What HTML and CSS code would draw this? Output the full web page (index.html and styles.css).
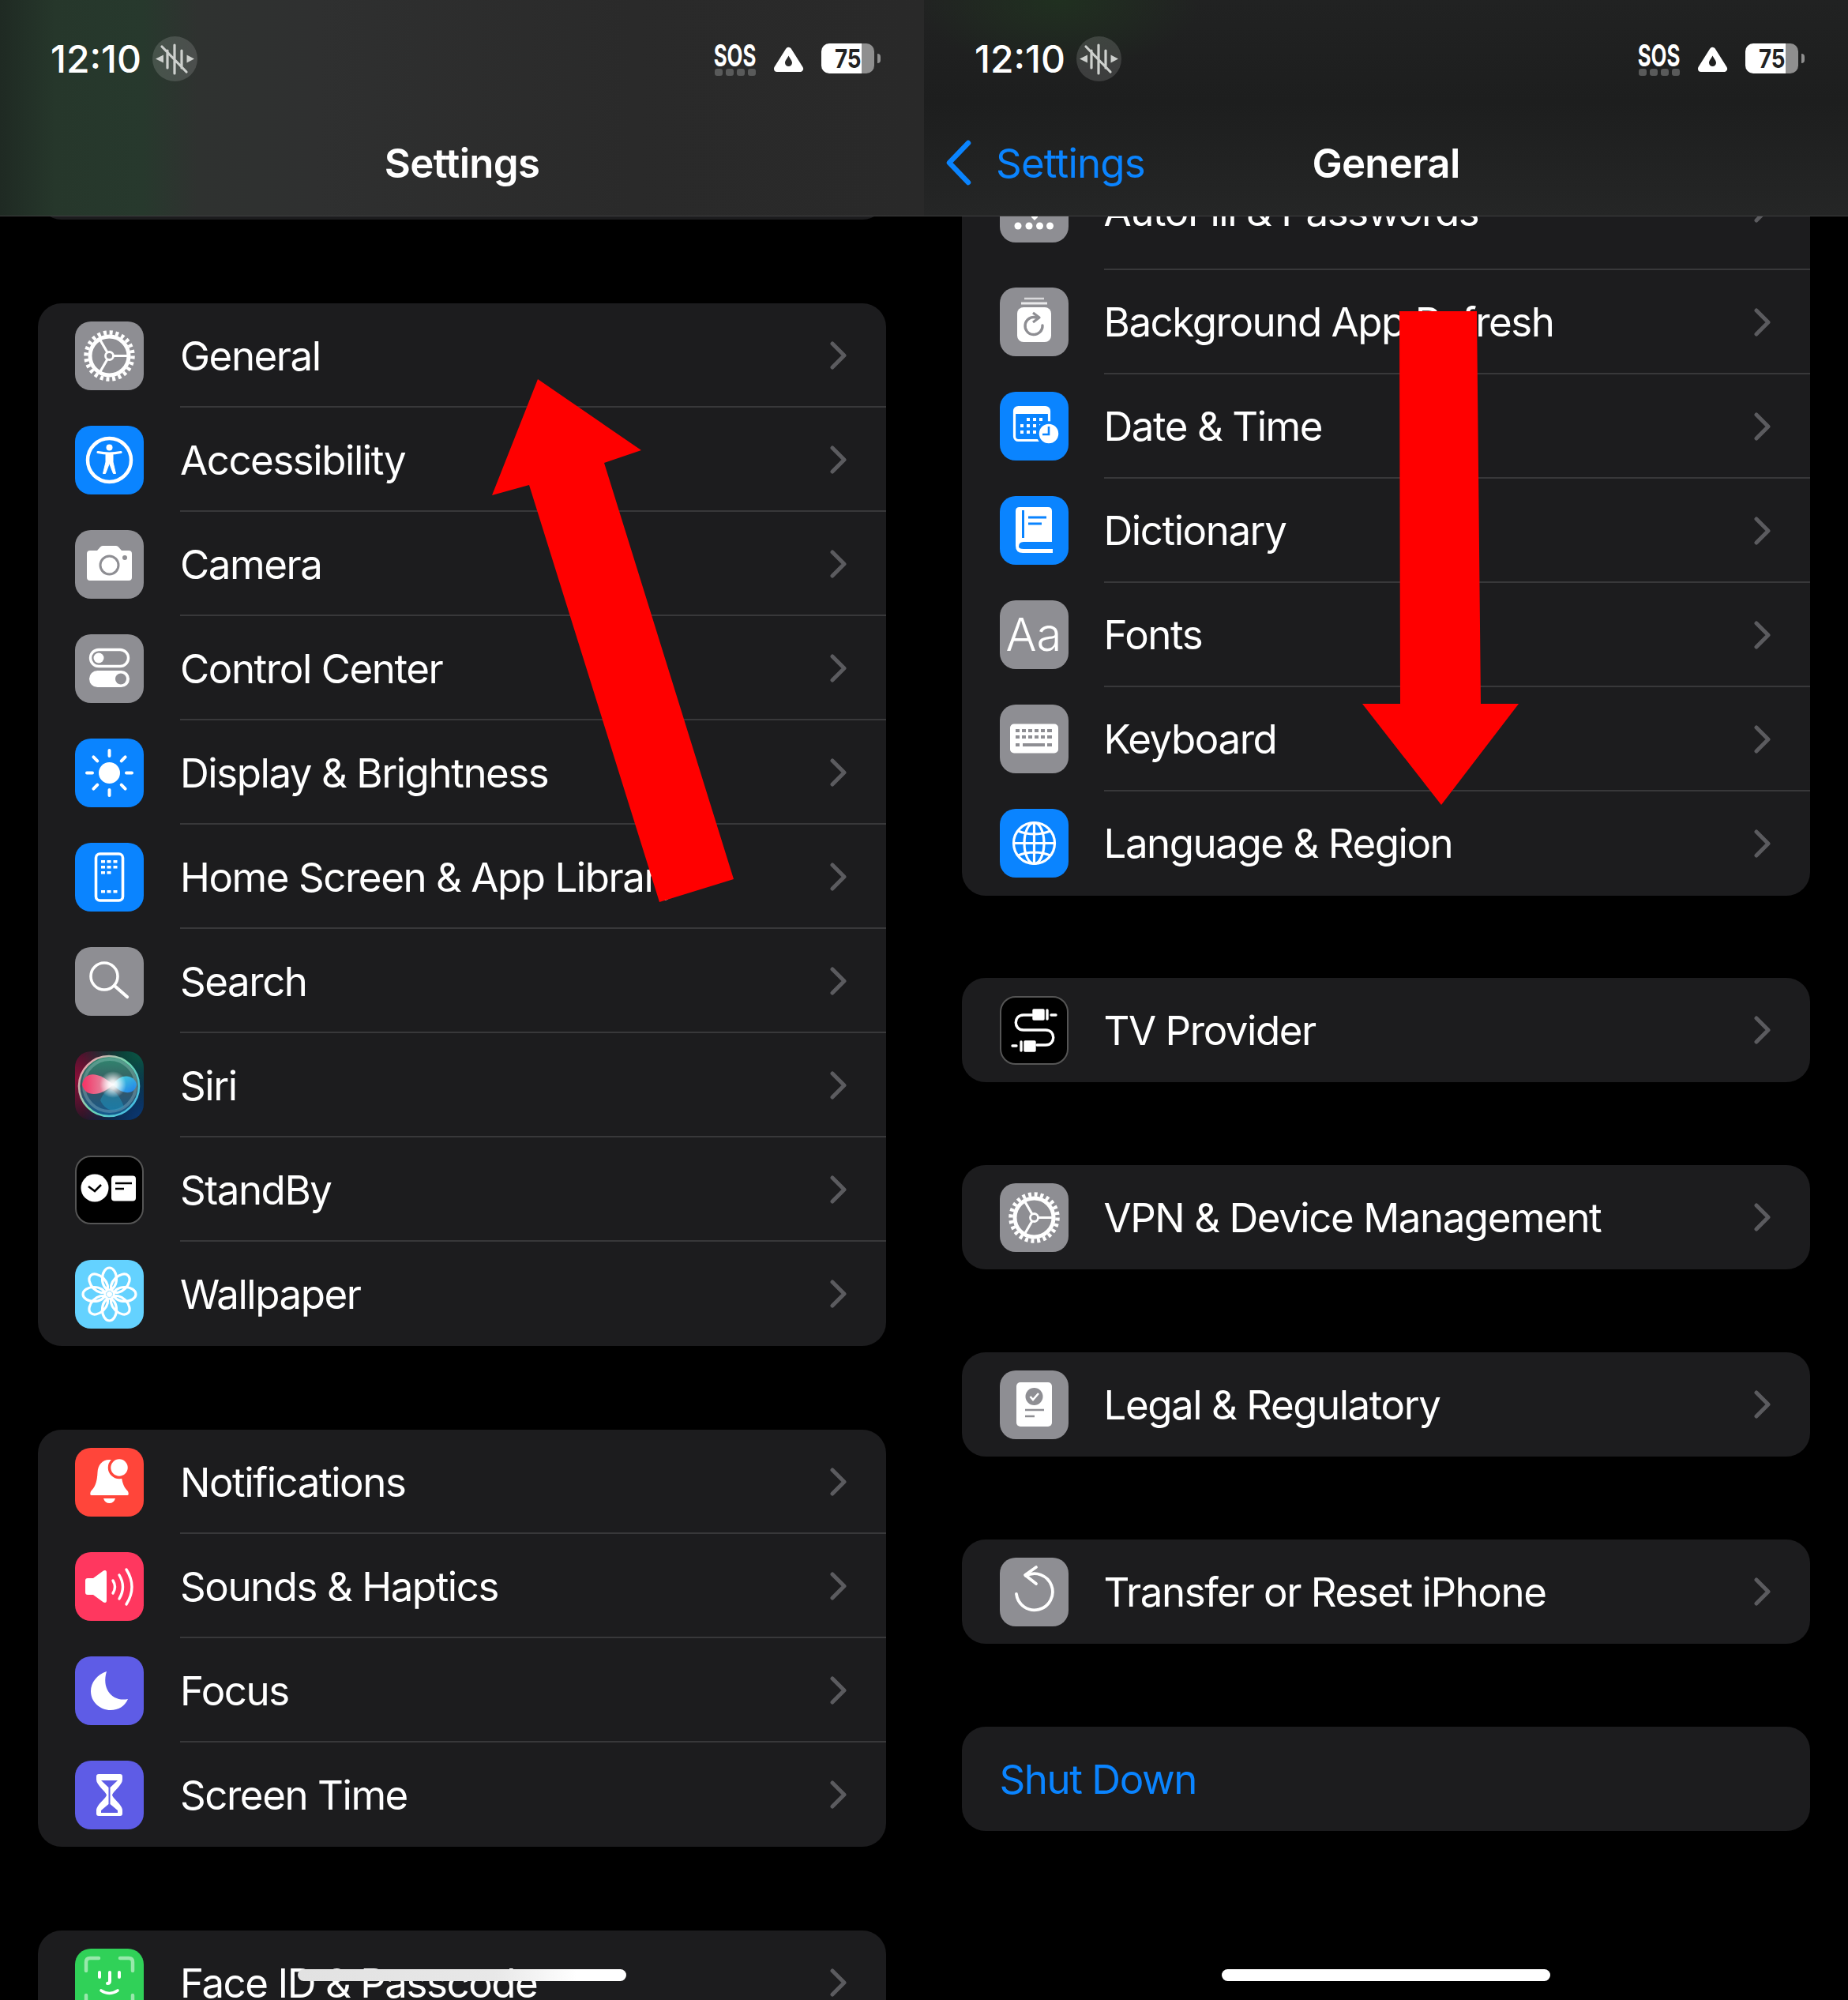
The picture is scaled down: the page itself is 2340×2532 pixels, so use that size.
FILE: index.html
```html
<!DOCTYPE html>
<html lang="en">
<head>
    <meta charset="UTF-8">
    <title>Settings</title>
    <link rel="stylesheet" href="styles.css">
</head>
<body>
<svg class="defs" width="0" height="0">
    <defs>
        <symbol id="gear" viewBox="0 0 87 87">
            <circle cx="43.5" cy="43.5" r="29.5" fill="none" stroke="#fff" stroke-width="5.5" stroke-dasharray="4 3.72"/>
            <circle cx="43.5" cy="43.5" r="24.5" fill="none" stroke="#fff" stroke-width="5"/>
            <path d="M49 43.5H68M40.7 38.7L31 22M40.7 48.3L31 65" stroke="#fff" stroke-width="3.2"/>
            <circle cx="43.5" cy="43.5" r="5" fill="none" stroke="#fff" stroke-width="2.8"/>
        </symbol>
        <symbol id="chev" viewBox="0 0 21 36">
            <path d="M3 3L18 18L3 33" fill="none" stroke="#5b5b5f" stroke-width="5" stroke-linecap="round" stroke-linejoin="round"/>
        </symbol>
        <symbol id="mute" viewBox="0 0 57 57">
            <path d="M14 23.5L4 28.5L14 33.5ZM43.5 23.5L53 28.5L43.5 33.5Z" fill="#cdd0cd"/>
            <path d="M19 18V40M28 11V47M37 18V40M12 13L43 45" stroke="#cdd0cd" stroke-width="3.2" stroke-linecap="round"/>
        </symbol>
        <radialGradient id="siri-core">
            <stop offset="0" stop-color="#fff"/>
            <stop offset=".3" stop-color="#fff" stop-opacity=".85"/>
            <stop offset="1" stop-color="#fff" stop-opacity="0"/>
        </radialGradient>
        <radialGradient id="siri-red" cx="0" cy=".4" r=".8">
            <stop offset="0" stop-color="#8a0f38"/>
            <stop offset="1" stop-color="#8a0f38" stop-opacity="0"/>
        </radialGradient>
        <radialGradient id="siri-teal" cx="1" cy="0" r=".9">
            <stop offset="0" stop-color="#0a5a48"/>
            <stop offset="1" stop-color="#0a5a48" stop-opacity="0"/>
        </radialGradient>
        <radialGradient id="siri-navy" cx="1" cy="1" r=".9">
            <stop offset="0" stop-color="#0a3a78"/>
            <stop offset="1" stop-color="#0a3a78" stop-opacity="0"/>
        </radialGradient>
        <linearGradient id="siri-ball" x1="0" x2="0" y1="0" y2="1">
            <stop offset="0" stop-color="#2f8a70"/>
            <stop offset=".5" stop-color="#3a5560"/>
            <stop offset="1" stop-color="#125a90"/>
        </linearGradient>
        <linearGradient id="siri-ring" x1="0" x2="1" y1=".2" y2="1">
            <stop offset="0" stop-color="#f4a0ac"/>
            <stop offset=".45" stop-color="#6fd8b0"/>
            <stop offset="1" stop-color="#38b4f4"/>
        </linearGradient>
        <linearGradient id="siri-pink" x1="0" x2="1" y1="0" y2="0">
            <stop offset="0" stop-color="#ff2d63"/>
            <stop offset=".6" stop-color="#f07a98"/>
            <stop offset="1" stop-color="#f0c0d0"/>
        </linearGradient>
        <linearGradient id="siri-blue" x1="0" x2="1" y1="0" y2="1">
            <stop offset="0" stop-color="#4ae0e0"/>
            <stop offset="1" stop-color="#1e7ef0"/>
        </linearGradient>
    </defs>
</svg>

<div class="screens">
    <!-- left phone -->
    <section class="panel">
        <header class="topbar glow-left">
            <div class="status">
                <div class="status-left">
                    <span class="clock">12:10</span>
                    <span class="mute-pill"><svg><use href="#mute"/></svg></span>
                </div>
                <div class="status-right">
                    <div class="sos"><span class="sos-text">SOS</span><span class="sos-dots"><i></i><i></i><i></i><i></i></span></div>
                    <svg class="warn" viewBox="0 0 39 35" width="39" height="35">
                        <path d="M19.5 7L34 30H5Z" fill="#fff" stroke="#fff" stroke-width="8" stroke-linejoin="round"/>
                        <path d="M19.5 13.5C17.5 17.5 15 20 15 22.5A4.5 4.5 0 0 0 24 22.5C24 20 21.5 17.5 19.5 13.5Z" fill="#2b2b2b"/>
                    </svg>
                    <div class="battery"><span class="battery-num">75</span></div>
                    <span class="battery-tip"></span>
                </div>
            </div>
            <nav class="navbar">
                <span></span>
                <span class="nav-title">Settings</span>
                <span></span>
            </nav>
        </header>

        <div class="list">
            <div class="card card-stub"></div>

            <div class="card">
                <div class="row">
                    <span class="icon gray"><svg><use href="#gear"/></svg></span>
                    <span class="label">General</span>
                    <svg class="chevron"><use href="#chev"/></svg>
                </div>
                <div class="row">
                    <span class="icon blue">
                        <svg viewBox="0 0 87 87">
                            <circle cx="43.5" cy="43.5" r="27.5" fill="none" stroke="#fff" stroke-width="4.5"/>
                            <circle cx="43.5" cy="27.5" r="4" fill="#fff"/>
                            <path d="M29 33.5Q43.5 36.5 58 33.5" fill="none" stroke="#fff" stroke-width="3.2" stroke-linecap="round"/>
                            <path d="M39 35H48V46L51.5 60.5H48.5L43.5 47.5L38.5 60.5H35.5L39 46Z" fill="#fff" stroke="#fff" stroke-width="1" stroke-linejoin="round"/>
                        </svg>
                    </span>
                    <span class="label">Accessibility</span>
                    <svg class="chevron"><use href="#chev"/></svg>
                </div>
                <div class="row">
                    <span class="icon gray">
                        <svg viewBox="0 0 87 87">
                            <path d="M19 26H28L32 21.5Q33 20 35 20H52Q54 20 55 21.5L59 26H68Q72 26 72 30V60Q72 64 68 64H19Q15 64 15 60V30Q15 26 19 26Z" fill="#fff"/>
                            <circle cx="43.5" cy="44.5" r="11.5" fill="#fff" stroke="#8e8e93" stroke-width="3"/>
                            <circle cx="63" cy="35" r="3" fill="#8e8e93"/>
                        </svg>
                    </span>
                    <span class="label">Camera</span>
                    <svg class="chevron"><use href="#chev"/></svg>
                </div>
                <div class="row">
                    <span class="icon gray">
                        <svg viewBox="0 0 87 87">
                            <rect x="19.5" y="19.5" width="48" height="21" rx="10.5" fill="none" stroke="#fff" stroke-width="3.4"/>
                            <circle cx="30" cy="30" r="6.5" fill="#fff"/>
                            <rect x="18" y="46" width="51" height="21" rx="10.5" fill="#fff"/>
                            <circle cx="58" cy="56.5" r="7" fill="#8e8e93"/>
                        </svg>
                    </span>
                    <span class="label">Control Center</span>
                    <svg class="chevron"><use href="#chev"/></svg>
                </div>
                <div class="row">
                    <span class="icon blue">
                        <svg viewBox="0 0 87 87">
                            <circle cx="43.5" cy="43.5" r="13.5" fill="#fff"/>
                            <path d="M43.5 15V22M43.5 65V72M15 43.5H22M65 43.5H72M23.4 23.4L28.3 28.3M58.7 58.7L63.6 63.6M63.6 23.4L58.7 28.3M28.3 58.7L23.4 63.6" stroke="#fff" stroke-width="4" stroke-linecap="round"/>
                        </svg>
                    </span>
                    <span class="label">Display &amp; Brightness</span>
                    <svg class="chevron"><use href="#chev"/></svg>
                </div>
                <div class="row">
                    <span class="icon blue">
                        <svg viewBox="0 0 87 87">
                            <rect x="26.5" y="14" width="34" height="59" rx="5" fill="none" stroke="#fff" stroke-width="3.6"/>
                            <path d="M33 22h5v3.5h-5zM40.5 22h5v3.5h-5zM48.5 22h5v3.5h-5zM33 29h5v3.5h-5zM40.5 29h5v3.5h-5zM48.5 29h5v3.5h-5zM33 36h5v3.5h-5zM40.5 36h5v3.5h-5zM33 60h5v3.5h-5zM40.5 60h5v3.5h-5zM48.5 60h5v3.5h-5z" fill="#fff"/>
                        </svg>
                    </span>
                    <span class="label">Home Screen &amp; App Library</span>
                    <svg class="chevron"><use href="#chev"/></svg>
                </div>
                <div class="row">
                    <span class="icon gray">
                        <svg viewBox="0 0 87 87">
                            <circle cx="37" cy="37" r="17" fill="none" stroke="#fff" stroke-width="3.6"/>
                            <path d="M50 49L66 63" stroke="#fff" stroke-width="4.2" stroke-linecap="round"/>
                        </svg>
                    </span>
                    <span class="label">Search</span>
                    <svg class="chevron"><use href="#chev"/></svg>
                </div>
                <div class="row">
                    <span class="icon siri">
                        <svg viewBox="0 0 87 87">
                            <rect width="87" height="87" fill="url(#siri-red)"/>
                            <rect width="87" height="87" fill="url(#siri-teal)"/>
                            <rect width="87" height="87" fill="url(#siri-navy)"/>
                            <circle cx="43" cy="44" r="38" fill="url(#siri-ball)" stroke="url(#siri-ring)" stroke-width="2.6"/>
                            <circle cx="44" cy="43" r="33" fill="none" stroke="#dff" stroke-opacity=".22" stroke-width="4"/>
                            <path d="M32 62C38 46 50 40 62 70C52 78 38 76 32 62Z" fill="#20a0c8" opacity=".45"/>
                            <path d="M9 42C13 22 33 28 48 42C35 56 13 60 9 42Z" fill="url(#siri-pink)" opacity=".95"/>
                            <path d="M48 42C58 26 76 30 78 42C76 55 60 56 48 42Z" fill="url(#siri-blue)" opacity=".95"/>
                            <circle cx="48" cy="42" r="17" fill="url(#siri-core)"/>
                        </svg>
                    </span>
                    <span class="label">Siri</span>
                    <svg class="chevron"><use href="#chev"/></svg>
                </div>
                <div class="row">
                    <span class="icon standby">
                        <svg viewBox="0 0 87 87">
                            <circle cx="25" cy="41" r="17.5" fill="#fff"/>
                            <path d="M17 39L25 45L33 37" fill="none" stroke="#000" stroke-width="2.6"/>
                            <rect x="46" y="25.5" width="31" height="32" rx="4" fill="#fff"/>
                            <path d="M51 35H72M51 42H62" stroke="#000" stroke-width="2.6"/>
                        </svg>
                    </span>
                    <span class="label">StandBy</span>
                    <svg class="chevron"><use href="#chev"/></svg>
                </div>
                <div class="row">
                    <span class="icon cyan">
                        <svg viewBox="0 0 87 87" fill="none" stroke="#fff" stroke-width="3.2">
                            <ellipse cx="63" cy="43.5" rx="14" ry="9"/>
                            <ellipse cx="24" cy="43.5" rx="14" ry="9"/>
                            <ellipse cx="43.5" cy="24" rx="9" ry="14"/>
                            <ellipse cx="43.5" cy="63" rx="9" ry="14"/>
                            <ellipse cx="57.3" cy="29.7" rx="14" ry="9" transform="rotate(-45 57.3 29.7)"/>
                            <ellipse cx="29.7" cy="57.3" rx="14" ry="9" transform="rotate(-45 29.7 57.3)"/>
                            <ellipse cx="29.7" cy="29.7" rx="14" ry="9" transform="rotate(45 29.7 29.7)"/>
                            <ellipse cx="57.3" cy="57.3" rx="14" ry="9" transform="rotate(45 57.3 57.3)"/>
                            <circle cx="43.5" cy="43.5" r="3.5" fill="#fff" stroke="none"/>
                        </svg>
                    </span>
                    <span class="label">Wallpaper</span>
                    <svg class="chevron"><use href="#chev"/></svg>
                </div>
            </div>

            <div class="card">
                <div class="row">
                    <span class="icon red">
                        <svg viewBox="0 0 87 87">
                            <path d="M43.5 15C53 15 58 22 58.5 31C59 44 62 50 67 55Q69 60 66 60H21Q18 60 20 55C25 50 28 44 28.5 31C29 22 34 15 43.5 15Z" fill="#fff"/>
                            <path d="M36 64H51Q49 70 43.5 70Q38 70 36 64Z" fill="#fff"/>
                            <circle cx="56" cy="25" r="12.5" fill="#fff" stroke="#ff453a" stroke-width="3.5"/>
                        </svg>
                    </span>
                    <span class="label">Notifications</span>
                    <svg class="chevron"><use href="#chev"/></svg>
                </div>
                <div class="row">
                    <span class="icon pink">
                        <svg viewBox="0 0 87 87">
                            <path d="M16 33H23L36 23.5Q40 22 40 26V61Q40 65 36 63.5L23 54H16Q13 54 13 51V36Q13 33 16 33Z" fill="#fff"/>
                            <path d="M48 36Q53 44 48 52M56 29Q65 44 56 59M65 22Q79 44 65 66" fill="none" stroke="#fff" stroke-width="3.4" stroke-linecap="round"/>
                        </svg>
                    </span>
                    <span class="label">Sounds &amp; Haptics</span>
                    <svg class="chevron"><use href="#chev"/></svg>
                </div>
                <div class="row">
                    <span class="icon indigo">
                        <svg viewBox="0 0 87 87">
                            <path d="M40 19C28 23 20 33 20 44C20 58 32 68 45 68C55 68 63 63 67 54C48 58 33 42 40 19Z" fill="#fff"/>
                        </svg>
                    </span>
                    <span class="label">Focus</span>
                    <svg class="chevron"><use href="#chev"/></svg>
                </div>
                <div class="row">
                    <span class="icon indigo">
                        <svg viewBox="0 0 87 87">
                            <path d="M30 17H57Q60 17 60 20V24C60 31 48 39 47 43.5C48 48 60 56 60 63V67Q60 70 57 70H30Q27 70 27 67V63C27 56 39 48 40 43.5C39 39 27 31 27 24V20Q27 17 30 17Z" fill="#fff"/>
                            <path d="M33 25H54L44.5 34V55L54 63V66H33V63L42.5 55V34Z" fill="#5e5ce6"/>
                        </svg>
                    </span>
                    <span class="label">Screen Time</span>
                    <svg class="chevron"><use href="#chev"/></svg>
                </div>
            </div>

            <div class="card">
                <div class="row">
                    <span class="icon green">
                        <svg viewBox="0 0 87 87">
                            <path d="M14 28V17Q14 12 19 12H30M57 12H68Q73 12 73 17V28M14 59V70Q14 75 19 75H30M57 75H68Q73 75 73 70V59" fill="none" stroke="#98e8ab" stroke-width="4.5" stroke-linecap="round"/>
                            <path d="M31 30V36M56 30V36M44 30V41Q44 44 41 44" fill="none" stroke="#fff" stroke-width="4" stroke-linecap="round"/>
                            <path d="M33 53Q43.5 60 54 53" fill="none" stroke="#fff" stroke-width="3.6" stroke-linecap="round"/>
                        </svg>
                    </span>
                    <span class="label">Face ID &amp; Passcode</span>
                    <svg class="chevron"><use href="#chev"/></svg>
                </div>
            </div>
        </div>

        <div class="home-bar home-bar-fade"></div>
    </section>

    <!-- right phone -->
    <section class="panel panel-right">
        <header class="topbar glow-top">
            <div class="status">
                <div class="status-left">
                    <span class="clock">12:10</span>
                    <span class="mute-pill"><svg><use href="#mute"/></svg></span>
                </div>
                <div class="status-right">
                    <div class="sos"><span class="sos-text">SOS</span><span class="sos-dots"><i></i><i></i><i></i><i></i></span></div>
                    <svg class="warn" viewBox="0 0 39 35" width="39" height="35">
                        <path d="M19.5 7L34 30H5Z" fill="#fff" stroke="#fff" stroke-width="8" stroke-linejoin="round"/>
                        <path d="M19.5 13.5C17.5 17.5 15 20 15 22.5A4.5 4.5 0 0 0 24 22.5C24 20 21.5 17.5 19.5 13.5Z" fill="#1f2020"/>
                    </svg>
                    <div class="battery"><span class="battery-num">75</span></div>
                    <span class="battery-tip"></span>
                </div>
            </div>
            <nav class="navbar">
                <span class="back">
                    <svg viewBox="0 0 34 58" width="34" height="58">
                        <path d="M29 4L5 29L29 54" fill="none" stroke="#0a84ff" stroke-width="6.5" stroke-linecap="round" stroke-linejoin="round"/>
                    </svg>
                    <span class="back-text">Settings</span>
                </span>
                <span class="nav-title">General</span>
                <span></span>
            </nav>
        </header>

        <div class="list">
            <div class="card card-head">
                <div class="row row-tall">
                    <span class="icon gray">
                        <svg viewBox="0 0 87 87">
                            <path d="M40 52H48V55L44 59L40 55Z" fill="#fff"/>
                            <circle cx="23" cy="66" r="4.5" fill="#fff"/>
                            <circle cx="37" cy="66" r="4.5" fill="#fff"/>
                            <circle cx="50.5" cy="66" r="4.5" fill="#fff"/>
                            <circle cx="63.5" cy="66" r="4.5" fill="#fff"/>
                        </svg>
                    </span>
                    <span class="label">AutoFill &amp; Passwords</span>
                    <svg class="chevron"><use href="#chev"/></svg>
                </div>
                <div class="row">
                    <span class="icon gray">
                        <svg viewBox="0 0 87 87">
                            <path d="M31 14H56" stroke="#d9d9dc" stroke-width="2.6"/>
                            <path d="M27 20H60" stroke="#e9e9eb" stroke-width="3"/>
                            <rect x="22" y="25" width="43" height="44" rx="8" fill="#fff"/>
                            <path d="M46 38A11 11 0 1 0 54 48" fill="none" stroke="#8e8e93" stroke-width="3.4" stroke-linecap="round"/>
                            <path d="M42 32L50 38L42 44" fill="none" stroke="#8e8e93" stroke-width="3.2" stroke-linejoin="round"/>
                        </svg>
                    </span>
                    <span class="label">Background App Refresh</span>
                    <svg class="chevron"><use href="#chev"/></svg>
                </div>
                <div class="row">
                    <span class="icon blue">
                        <svg viewBox="0 0 87 87">
                            <rect x="18.5" y="19.5" width="44" height="42" rx="5" fill="none" stroke="#fff" stroke-width="3.2"/>
                            <path d="M20 20H61V28H20Z" fill="#fff"/>
                            <path d="M34 33h4v4h-4zM42 33h4v4h-4zM50 33h4v4h-4zM26 41h4v4h-4zM34 41h4v4h-4zM42 41h4v4h-4zM50 41h4v4h-4zM26 49h4v4h-4zM34 49h4v4h-4zM42 49h4v4h-4z" fill="#fff"/>
                            <circle cx="62" cy="53" r="14" fill="#fff" stroke="#0a84ff" stroke-width="3.5"/>
                            <path d="M62 44V54H54" fill="none" stroke="#0a84ff" stroke-width="2.6"/>
                        </svg>
                    </span>
                    <span class="label">Date &amp; Time</span>
                    <svg class="chevron"><use href="#chev"/></svg>
                </div>
                <div class="row">
                    <span class="icon blue">
                        <svg viewBox="0 0 87 87">
                            <path d="M25 14H61Q66 14 66 19V58H30Q24 58 24 64Q24 67 30 67H67V72H29Q20 72 20 63V19Q20 14 25 14Z" fill="#fff"/>
                            <path d="M28 18H31V53H28Z" fill="#0a84ff"/>
                            <path d="M36 27H59M36 35H53" stroke="#0a84ff" stroke-width="3"/>
                        </svg>
                    </span>
                    <span class="label">Dictionary</span>
                    <svg class="chevron"><use href="#chev"/></svg>
                </div>
                <div class="row">
                    <span class="icon gray icon-text">Aa</span>
                    <span class="label">Fonts</span>
                    <svg class="chevron"><use href="#chev"/></svg>
                </div>
                <div class="row">
                    <span class="icon gray">
                        <svg viewBox="0 0 87 87">
                            <rect x="13" y="24.5" width="61" height="37" rx="5" fill="#fff"/>
                            <path d="M20 31h5v4h-5zM28 31h5v4h-5zM36 31h5v4h-5zM44 31h5v4h-5zM52 31h5v4h-5zM60 31h6v4h-6zM20 39h5v4h-5zM28 39h5v4h-5zM36 39h5v4h-5zM44 39h5v4h-5zM52 39h5v4h-5zM60 39h6v4h-6zM20 49h5v4h-5zM29 49h28v4h-28zM60 49h6v4h-6z" fill="#8e8e93"/>
                        </svg>
                    </span>
                    <span class="label">Keyboard</span>
                    <svg class="chevron"><use href="#chev"/></svg>
                </div>
                <div class="row">
                    <span class="icon blue">
                        <svg viewBox="0 0 87 87" fill="none" stroke="#fff" stroke-width="3.2">
                            <circle cx="43.5" cy="43.5" r="26"/>
                            <ellipse cx="43.5" cy="43.5" rx="12.5" ry="26"/>
                            <path d="M43.5 17.5V69.5M17.5 43.5H69.5M23 28Q43.5 36 64 28M23 59Q43.5 51 64 59"/>
                        </svg>
                    </span>
                    <span class="label">Language &amp; Region</span>
                    <svg class="chevron"><use href="#chev"/></svg>
                </div>
            </div>

            <div class="card">
                <div class="row">
                    <span class="icon standby">
                        <svg viewBox="0 0 87 87" fill="none" stroke="#fff" stroke-width="3.4" stroke-linecap="round">
                            <path d="M41 24H30C17 24 17 43 30 43H58C71 43 71 62 58 62H47"/>
                            <path d="M43 18H55V29H43ZM32 58H44V69H32Z" fill="#fff" stroke-linejoin="round"/>
                            <path d="M60 18V29M65 24H71M27 58V69M21 63H16"/>
                        </svg>
                    </span>
                    <span class="label">TV Provider</span>
                    <svg class="chevron"><use href="#chev"/></svg>
                </div>
            </div>

            <div class="card">
                <div class="row">
                    <span class="icon gray"><svg><use href="#gear"/></svg></span>
                    <span class="label">VPN &amp; Device Management</span>
                    <svg class="chevron"><use href="#chev"/></svg>
                </div>
            </div>

            <div class="card">
                <div class="row">
                    <span class="icon gray">
                        <svg viewBox="0 0 87 87">
                            <rect x="21" y="15" width="45" height="56" rx="5" fill="#fff"/>
                            <circle cx="43.5" cy="33" r="11" fill="#8e8e93"/>
                            <path d="M38.5 33L42 37L49 29" fill="none" stroke="#fff" stroke-width="2.6"/>
                            <path d="M32 50H56M32 58H44" stroke="#8e8e93" stroke-width="2.6"/>
                        </svg>
                    </span>
                    <span class="label">Legal &amp; Regulatory</span>
                    <svg class="chevron"><use href="#chev"/></svg>
                </div>
            </div>

            <div class="card">
                <div class="row">
                    <span class="icon gray">
                        <svg viewBox="0 0 87 87" fill="none" stroke="#fff" stroke-width="3.8" stroke-linecap="round" stroke-linejoin="round">
                            <path d="M21 46A23 23 0 1 0 33 23"/>
                            <path d="M46 12L32 22L46 33"/>
                        </svg>
                    </span>
                    <span class="label">Transfer or Reset iPhone</span>
                    <svg class="chevron"><use href="#chev"/></svg>
                </div>
            </div>

            <div class="card">
                <div class="row">
                    <span class="label label-link">Shut Down</span>
                </div>
            </div>
        </div>

        <div class="home-bar"></div>
    </section>
</div>

<!-- red arrows drawn over both phones -->
<svg class="arrows" viewBox="0 0 2340 2532" width="2340" height="2532">
    <path d="M681 480L812 570L765 586L929 1113L835 1142L670 614L623 627Z" fill="#ff0000"/>
    <path d="M1772 394H1870L1875 891H1923L1825 1019L1725 891H1773Z" fill="#ff0000"/>
</svg>
</body>
</html>
```

FILE: styles.css
```css
* { box-sizing: border-box; }
html, body { margin: 0; padding: 0; background: #000; }
body { font-family: Inter, "Liberation Sans", sans-serif; color: #fff; width: 2340px; height: 2532px; overflow: hidden; position: relative; }
.defs { position: absolute; }

.screens { display: flex; }
.panel { width: 1170px; height: 2532px; position: relative; overflow: hidden; background: #000; }

/* header */
.topbar { position: absolute; top: 0; left: 0; right: 0; height: 274px; border-bottom: 1px solid #3f3f40; z-index: 2; }
.glow-left { background: linear-gradient(90deg, #1f2a23 0, #26372b 70px, #27392d 180px, #2f3230 250px, #2f3030 400px, #2a2a2a 800px, #292929 100%); }
.glow-top { background: radial-gradient(ellipse 180px 90px at 170px 0, #203020 0, rgba(32,48,32,0) 100%), linear-gradient(180deg, #212222 0, #1d1e1e 130px, #252626 100%); }

.status { height: 148px; display: flex; align-items: center; justify-content: space-between; padding: 0 55px 0 64px; }
.status-left { display: flex; align-items: center; gap: 13px; }
.clock { font-size: 48px; font-weight: 500; width: 116px; white-space: nowrap; }
.mute-pill { width: 57px; height: 57px; border-radius: 50%; background: rgba(255,255,255,.14); display: flex; }
.mute-pill svg { width: 57px; height: 57px; }
.status-right { display: flex; align-items: center; }
.sos { width: 54px; display: flex; flex-direction: column; align-items: center; margin: 4px 21px 0 0; }
.sos-text { font-size: 38px; line-height: 28px; font-weight: 700; transform: scaleX(.68); display: block; }
.sos-dots { display: flex; gap: 4.5px; margin-top: 3px; }
.sos-dots i { width: 9.5px; height: 9px; border-radius: 3px; background: #595a5a; display: block; }
.warn { margin-right: 22px; }
.battery { width: 67px; height: 38px; border-radius: 10px; background: linear-gradient(90deg, #fff 0, #fff 76%, #8f8f8f 76%); display: flex; align-items: center; padding-left: 17px; }
.battery-num { color: #222; font-size: 33px; font-weight: 700; display: block; transform: scaleX(.84); transform-origin: left center; }
.battery-tip { width: 4px; height: 12px; margin-left: 4px; border-radius: 0 6px 6px 0; background: #8f8f8f; }

.navbar { height: 116px; display: grid; grid-template-columns: 1fr auto 1fr; align-items: center; }
.nav-title { font-size: 51px; font-weight: 600; letter-spacing: -.7px; }
.back { display: flex; align-items: center; padding-left: 27px; color: #0a84ff; }
.back-text { font-size: 51px; margin-left: 30px; letter-spacing: -.8px; }

/* grouped list */
.list { display: flex; flex-direction: column; }
.card { background: #1c1c1e; border-radius: 30px; margin: 0 48px 106px; }
.card-stub { height: 278px; }
.card-head { padding-top: 197.5px; border-radius: 0 0 30px 30px; margin-bottom: 104.5px; }
.panel-right .card + .card { margin-bottom: 105px; }

.row { height: 132px; display: flex; align-items: center; padding-left: 47px; padding-right: 50px; position: relative; }
.row::after { content: ""; position: absolute; left: 180px; right: 0; bottom: 0; height: 2px; background: #38383a; }
.row:last-child::after { display: none; }
.row-tall { height: 144px; padding-bottom: 12px; }
.row-tall .label { margin-top: 7px; }
.label { flex: 1; margin-left: 46px; font-size: 51px; letter-spacing: -1.45px; white-space: nowrap; }
.label-link { color: #0a84ff; margin-left: 0; }
.chevron { width: 21px; height: 36px; }
.panel-right .row { padding-left: 47.5px; }
.panel-right .label { margin-left: 45px; }
.panel-right .label-link { margin-left: 0; }

.icon { width: 87px; height: 87px; border-radius: 20px; display: block; overflow: hidden; flex: none; }
.icon svg { width: 87px; height: 87px; display: block; }
.gray { background: #8e8e93; }
.blue { background: #0a84ff; }
.red { background: #ff453a; }
.pink { background: #ff375f; }
.indigo { background: #5e5ce6; }
.green { background: #30d158; }
.cyan { background: #64d2ff; }
.standby { background: #000; border: 2px solid #555; }
.standby svg { margin: -2px; }
.siri { background: #0b1720; }
.icon-text { font-size: 58px; font-weight: 300; line-height: 87px; text-align: center; letter-spacing: 0; color: #fff; }

/* overlays */
.home-bar { position: absolute; left: 377px; top: 2493px; width: 416px; height: 15px; border-radius: 8px; background: #fff; z-index: 3; }
.home-bar-fade { background: linear-gradient(90deg, #e2e2e2 0, #e8e8e8 60%, #fff 85%); }
.arrows { position: absolute; top: 0; left: 0; z-index: 4; }
```
